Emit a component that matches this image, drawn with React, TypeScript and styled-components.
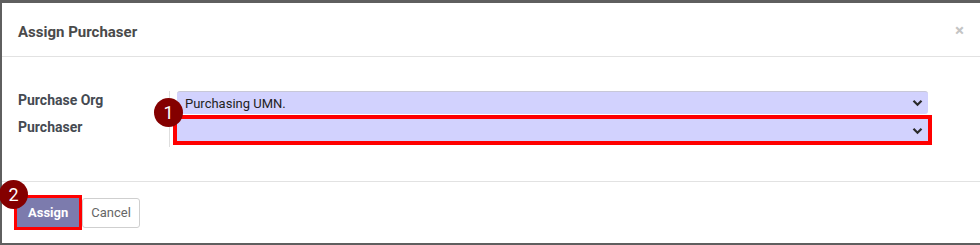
import styled, { createGlobalStyle } from "styled-components";

const GlobalStyle = createGlobalStyle`
  html, body {
    margin: 0;
    padding: 0;
    background: #5f5f5f;
    overflow: hidden;
  }
  body {
    font-family: Roboto, "Liberation Sans", Arial, sans-serif;
    font-size: 13px;
  }
`;

const Modal = styled.div`
  margin: 3px 0 0 2px;
  width: 978px;
  height: 240px;
  background: #fff;
  display: flex;
  flex-direction: column;
`;

const Header = styled.div`
  height: 53px;
  display: flex;
  align-items: center;
  justify-content: space-between;
  padding: 0 16px 0 16px;
  border-bottom: 1px solid #e2e2e2;
`;

const Title = styled.h4`
  margin: 0;
  font-size: 15px;
  font-weight: 700;
  color: #4a4a4a;
  padding-top: 4px;
`;

const Close = styled.span`
  font-size: 17px;
  font-weight: 700;
  color: #c4c4c4;
  line-height: 1;
  padding-top: 1px;
`;

const Body = styled.div`
  height: 125px;
  padding: 34px 52px 0 16px;
  box-sizing: border-box;
  border-bottom: 1px solid #e2e2e2;
`;

const Fields = styled.div`
  display: grid;
  grid-template-columns: 151px 1fr;
`;

const Labels = styled.div`
  display: flex;
  flex-direction: column;
`;

const Label = styled.label<{ $h: number }>`
  height: ${(p) => p.$h}px;
  display: flex;
  align-items: center;
  font-weight: 700;
  color: #454a52;
  font-size: 14px;
`;

const Values = styled.div`
  border-left: 1px solid #dedede;
  padding: 0 0 6px 7px;
  display: flex;
  flex-direction: column;
  gap: 5px;
`;

const SelectWrap = styled.div<{ $highlight?: boolean }>`
  position: relative;
  height: ${(p) => (p.$highlight ? 22 : 23)}px;
  background: #d2d2fe;
  border-top: 1px solid ${(p) => (p.$highlight ? "#d2d2fe" : "#c8c8d8")};
  border-radius: 3px;
  box-sizing: border-box;
  display: flex;
  align-items: center;
  justify-content: space-between;
  padding: 0 5px 0 8px;
  color: #222;
  font-size: 13px;
  ${(p) => p.$highlight && "outline: 4px solid #ff0000; border-radius: 0;"}
`;

const Chevron = () => (
  <svg width="11" height="8" viewBox="0 0 11 8">
    <path d="M1.5 1.8 L5.5 5.8 L9.5 1.8" fill="none" stroke="#2b2b2b" strokeWidth="2.2" />
  </svg>
);

const Badge = styled.span<{ $left: number; $top: number }>`
  position: absolute;
  left: ${(p) => p.$left}px;
  top: ${(p) => p.$top}px;
  width: 29px;
  height: 29px;
  border-radius: 50%;
  background: #840000;
  color: #fff;
  font-size: 18px;
  font-weight: 400;
  display: flex;
  align-items: center;
  justify-content: center;
  z-index: 2;
`;

const Footer = styled.div`
  flex: 1;
  display: flex;
  align-items: center;
  gap: 3px;
  padding-left: 15px;
`;

const Button = styled.button<{ $primary?: boolean }>`
  position: relative;
  padding: 0 ${(p) => (p.$primary ? 10 : 8)}px;
  font-family: inherit;
  font-size: 13px;
  border-radius: 3px;
  border: 1px solid ${(p) => (p.$primary ? "#7c7bad" : "#cfcfcf")};
  background: ${(p) => (p.$primary ? "#7c7bad" : "#fff")};
  color: ${(p) => (p.$primary ? "#fff" : "#666")};
  font-weight: ${(p) => (p.$primary ? 700 : 400)};
  height: ${(p) => (p.$primary ? 29 : 30)}px;
  ${(p) => p.$primary && "outline: 3px solid #ff0000; border-radius: 0;"}
`;

export default function App() {
  return (
    <>
      <GlobalStyle />
      <Modal>
        <Header>
          <Title>Assign Purchaser</Title>
          <Close>×</Close>
        </Header>
        <Body>
          <Fields>
            <Labels>
              <Label $h={18}>Purchase Org</Label>
              <Label $h={36}>Purchaser</Label>
            </Labels>
            <Values>
              <SelectWrap>
                <span>Purchasing UMN.</span>
                <Chevron />
              </SelectWrap>
              <SelectWrap $highlight>
                <Badge $left={-23} $top={-22}>1</Badge>
                <span />
                <Chevron />
              </SelectWrap>
            </Values>
          </Fields>
        </Body>
        <Footer>
          <Button $primary>
            <Badge $left={-19} $top={-19}>2</Badge>
            Assign
          </Button>
          <Button>Cancel</Button>
        </Footer>
      </Modal>
    </>
  );
}
